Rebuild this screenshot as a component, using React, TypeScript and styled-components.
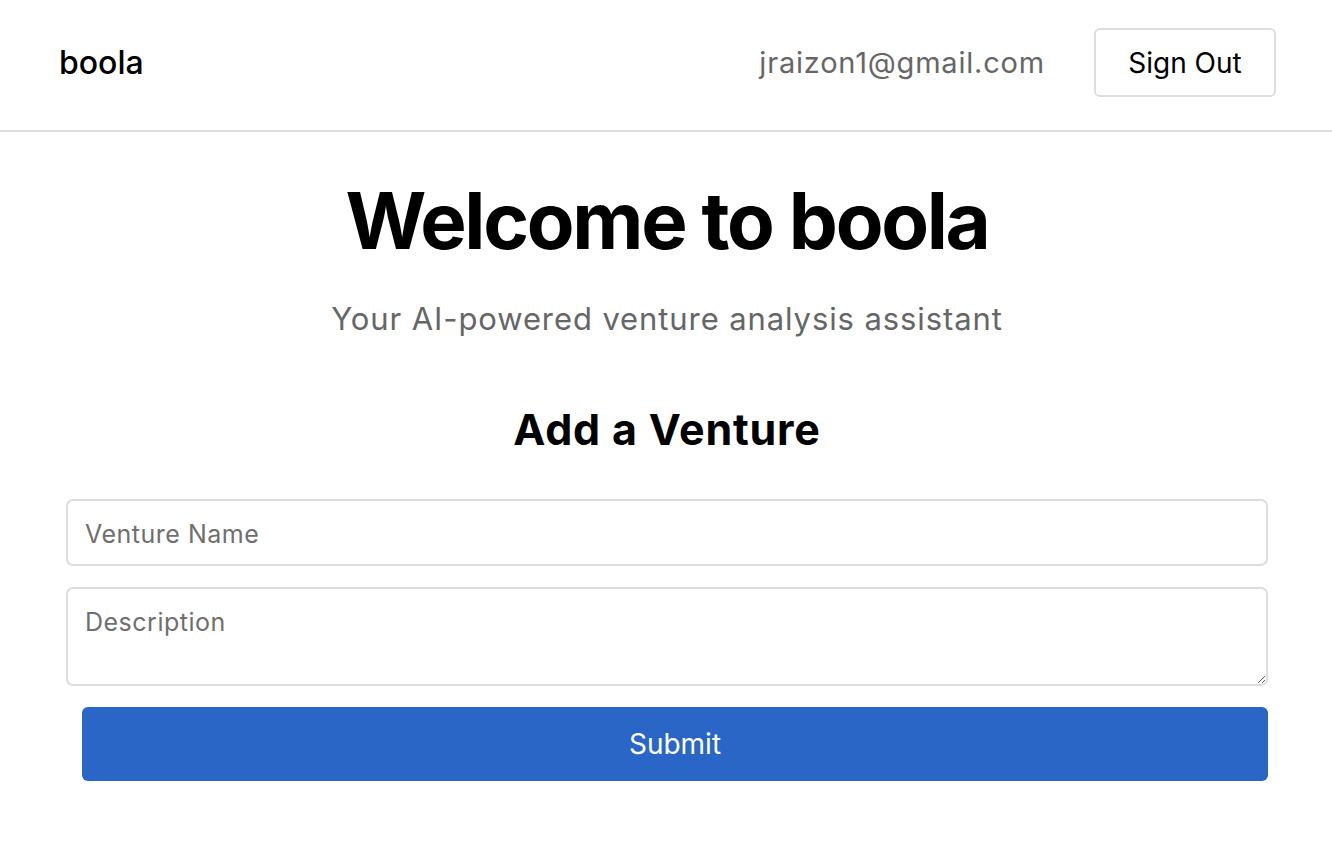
import React from "react";
import styled, { createGlobalStyle } from "styled-components";

const GlobalStyle = createGlobalStyle`
    body {
        margin: 0;
        background: #ffffff;
        font-family: Inter, "Liberation Sans", sans-serif;
        color: #000000;
    }
`;

const Header = styled.header`
    height: 125px;
    display: flex;
    align-items: center;
    justify-content: space-between;
    padding: 0 56px 5px 59px;
    border-bottom: 2px solid #dddddd;
`;

const Logo = styled.div`
    font-size: 32px;
    font-weight: 500;
`;

const UserArea = styled.div`
    display: flex;
    align-items: center;
    gap: 49px;
`;

const Email = styled.span`
    font-size: 29px;
    letter-spacing: 0.8px;
    color: #666666;
`;

const OutlineButton = styled.button`
    width: 182px;
    height: 69px;
    border: 2px solid #dddddd;
    border-radius: 6px;
    background: #ffffff;
    font-family: inherit;
    font-size: 28px;
    color: #000000;
`;

const Main = styled.main`
    display: flex;
    flex-direction: column;
    align-items: center;
    padding: 42px 64px 0 66px;
`;

const Title = styled.h1`
    margin: 0;
    font-size: 78px;
    font-weight: 700;
    line-height: 1.2;
    letter-spacing: -2.3px;
`;

const Subtitle = styled.p`
    margin: 31px 0 0;
    font-size: 31px;
    letter-spacing: 0.9px;
    color: #666666;
    line-height: 1.3;
`;

const SectionTitle = styled.h2`
    margin: 65px 0 0;
    font-size: 43px;
    font-weight: 700;
    letter-spacing: 0.8px;
    line-height: 1.2;
`;

const Form = styled.form`
    align-self: stretch;
    display: flex;
    flex-direction: column;
    gap: 21px;
    margin-top: 44px;
`;

const fieldBase = `
    box-sizing: border-box;
    width: 100%;
    border: 2px solid #dddddd;
    border-radius: 7px;
    padding: 0 17px;
    font-family: inherit;
    font-size: 25px;
    letter-spacing: 0.5px;
    color: #000000;
    background: #ffffff;
    outline: none;
    &::placeholder {
        color: #6f6f6f;
    }
`;

const TextInput = styled.input`
    ${fieldBase}
    height: 67px;
    padding-top: 3px;
`;

const TextArea = styled.textarea`
    ${fieldBase}
    height: 99px;
    padding-top: 18px;
    resize: vertical;
    display: block;
`;

const SubmitButton = styled.button`
    margin-left: 16px;
    height: 74px;
    border: none;
    border-radius: 6px;
    background: #2a66c6;
    color: #ffffff;
    font-family: inherit;
    font-size: 28px;
`;

export default function App() {
    return (
        <>
            <GlobalStyle />
            <Header>
                <Logo>boola</Logo>
                <UserArea>
                    <Email>jraizon1@gmail.com</Email>
                    <OutlineButton>Sign Out</OutlineButton>
                </UserArea>
            </Header>
            <Main>
                <Title>Welcome to boola</Title>
                <Subtitle>Your AI-powered venture analysis assistant</Subtitle>
                <SectionTitle>Add a Venture</SectionTitle>
                <Form onSubmit={(e) => e.preventDefault()}>
                    <TextInput placeholder="Venture Name" />
                    <TextArea placeholder="Description" />
                    <SubmitButton type="submit">Submit</SubmitButton>
                </Form>
            </Main>
        </>
    );
}
